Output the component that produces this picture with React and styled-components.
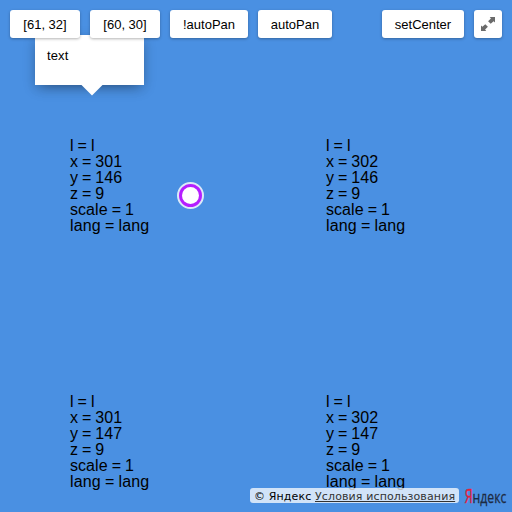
import React from 'react';
import styled, { createGlobalStyle } from 'styled-components';

const GlobalStyle = createGlobalStyle`
  body { margin: 0; }
  * { box-sizing: border-box; }
`;

const MapPane = styled.main`
  position: relative;
  width: 512px;
  height: 512px;
  overflow: hidden;
  background: #4a90e2;
  color: #000;
  font-family: "Liberation Sans", Arial, sans-serif;
`;

const Tiles = styled.div`
  display: grid;
  grid-template-columns: 256px 256px;
  grid-template-rows: 256px 256px;
`;

const Tile = styled.div`
  display: flex;
  flex-direction: column;
  padding: 138px 0 0 70px;
  font-size: 16px;
  line-height: 16px;
  word-spacing: -0.45px;
  white-space: nowrap;
`;

const TileLine = styled.div`
  letter-spacing: ${(p) => p.$spacing || 0}px;
`;

const Balloon = styled.div`
  position: absolute;
  left: 35px;
  top: 35px;
  width: 109px;
  height: 50px;
  padding: 13px 12px;
  background: #fff;
  box-shadow: 0 4px 12px rgba(0, 0, 0, 0.2), 0 5px 14px -8px rgba(0, 0, 0, 0.5);
  font-size: 13px;
  line-height: 16px;
  letter-spacing: 0.1px;
`;

const BalloonTail = styled.svg`
  position: absolute;
  left: 46px;
  top: 50px;
  display: block;
`;

const Placemark = styled.div`
  position: absolute;
  left: 177px;
  top: 182px;
  width: 27px;
  height: 27px;
  border: 2px solid #dce9f9;
  border-radius: 50%;
  background: #b51eff;
  padding: 3px;

  &::after {
    content: '';
    display: block;
    width: 17px;
    height: 17px;
    border-radius: 50%;
    background: #fff;
  }
`;

const Toolbar = styled.div`
  position: absolute;
  inset: 10px 10px auto;
  display: flex;
  gap: 10px;
`;

const Button = styled.button`
  display: flex;
  align-items: center;
  justify-content: center;
  width: ${(p) => p.$width}px;
  height: 28px;
  margin: 0 0 0 ${(p) => (p.$pushRight ? 'auto' : '0')};
  padding: 0;
  border: 0;
  border-radius: 3px;
  background: #fff;
  box-shadow: 0 1px 3px rgba(0, 0, 0, 0.3);
  color: #000;
  font: 13px/28px "Liberation Sans", Arial, sans-serif;
  white-space: nowrap;
`;

const ButtonLabel = styled.span`
  padding-top: 2px;
`;

const Footer = styled.footer`
  position: absolute;
  right: 0;
  bottom: 0;
  display: flex;
  align-items: flex-start;
  gap: 5px;
  height: 24px;
`;

const Copyright = styled.div`
  width: 209px;
  height: 15px;
  padding: 0 4px;
  border-radius: 3px;
  background: rgba(255, 255, 255, 0.75);
  color: #000;
  font: 11px/17px "DejaVu Sans", sans-serif;
  letter-spacing: 0.12px;
  white-space: nowrap;
`;

const Terms = styled.a`
  color: #333;
  text-decoration: underline;
`;

const Logo = styled.svg`
  display: block;
  margin-top: -8px;
  font-family: "Open Sans", sans-serif;
`;

const tiles = [[301, 146], [302, 146], [301, 147], [302, 147]];

const buttons = [
  { label: '[61, 32]', width: 70 },
  { label: '[60, 30]', width: 70 },
  { label: '!autoPan', width: 78 },
  { label: 'autoPan', width: 74 },
  { label: 'setCenter', width: 82, right: true },
];

export default function App() {
  return (
    <MapPane>
      <GlobalStyle />
      <Tiles>
        {tiles.map(([x, y]) => (
          <Tile key={`${x}-${y}`}>
            <TileLine>l = l</TileLine>
            <TileLine>x = {x}</TileLine>
            <TileLine>y = {y}</TileLine>
            <TileLine>z = 9</TileLine>
            <TileLine $spacing={0.05}>scale = 1</TileLine>
            <TileLine $spacing={0.13}>lang = lang</TileLine>
          </Tile>
        ))}
      </Tiles>
      <Placemark />
      <Balloon>
        text
        <BalloonTail width="22" height="11" viewBox="0 0 22 11">
          <path d="M0.5 0h21L11 10.5z" fill="#fff" />
        </BalloonTail>
      </Balloon>
      <Toolbar>
        {buttons.map((b) => (
          <Button key={b.label} $width={b.width} $pushRight={b.right}>
            <ButtonLabel>{b.label}</ButtonLabel>
          </Button>
        ))}
        <Button $width={28} aria-label="Fullscreen">
          <svg width="14" height="14" viewBox="0 0 14 14" fill="#6b6b6b">
            <path d="M8.8 0H14v5.4l-1.4-1.2-2.9 2.6-2.6-2.6 2.8-2.8z" />
            <path d="M5.2 14H0V8.6l1.4 1.2 2.9-2.6 2.6 2.6-2.8 2.8z" />
          </svg>
        </Button>
      </Toolbar>
      <Footer>
        <Copyright>© Яндекс <Terms>Условия использования</Terms></Copyright>
        <Logo width="48" height="32" viewBox="0 -8 48 32">
          <text transform="translate(0.8 15) scale(.62 1)" fontSize="20.5" fill="#e2203c" stroke="#e2203c" strokeWidth=".4">Я</text>
          <text transform="translate(8.6 15) scale(.72 1)" fontSize="17" fill="#1d2b42" stroke="#1d2b42" strokeWidth=".3">ндекс</text>
        </Logo>
      </Footer>
    </MapPane>
  );
}
